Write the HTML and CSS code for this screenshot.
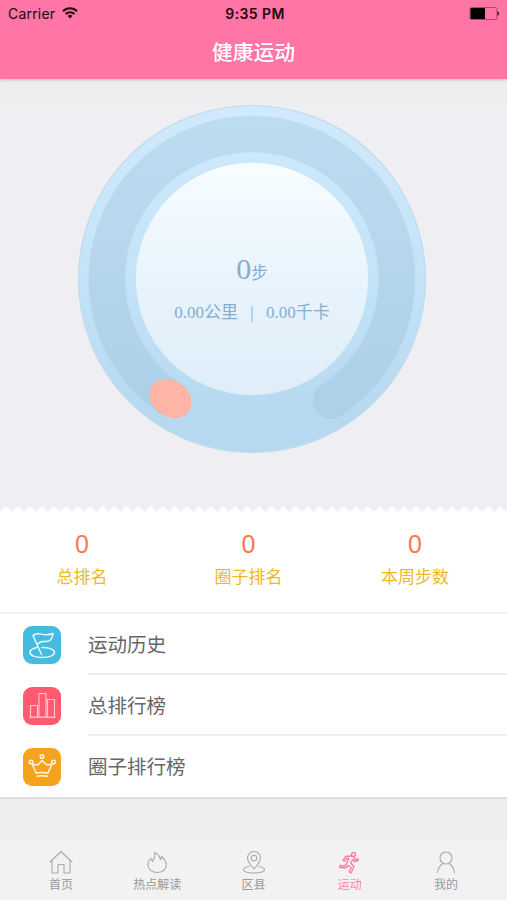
FILE: index.html
```html
<!DOCTYPE html>
<html lang="zh-CN">
<head>
<meta charset="utf-8">
<title>健康运动</title>
<link rel="stylesheet" href="styles.css">
</head>
<body>
<div class="app">
  <header class="header">
    <div class="status">
      <div class="carrier">Carrier
        <svg class="wifi" width="16" height="12" viewBox="0 0 16 12" fill="none" stroke="#23080f" stroke-width="2"><path d="M1 4.2a10 10 0 0 1 14 0M3.6 7a6.3 6.3 0 0 1 8.8 0"/><path d="M8 11.5 5.6 9a3.4 3.4 0 0 1 4.8 0z" fill="#23080f" stroke="none"/></svg>
      </div>
      <div class="time">9:35 PM</div>
      <div class="power"><svg width="31" height="13" viewBox="0 0 31 13"><rect x="1" y=".5" width="27" height="12" rx="1.500" fill="none" stroke="#a34e6d"/><path d="M1.500 1H16v11H1.500z" fill="#000"/><path d="M28.500 4q3 2.500 0 5z" fill="#23080f"/></svg></div>
    </div>
    <h1 class="title">健康运动</h1>
  </header>

  <main class="dial-area">
    <div class="dial">
      <svg class="dial-art" width="350" height="350" viewBox="-175 -175 350 350">
        <defs>
          <linearGradient id="disc" x1="0" y1="0" x2="0" y2="1"><stop offset="0" stop-color="#d1eafd"/><stop offset=".5" stop-color="#c3e3f7"/><stop offset=".85" stop-color="#b8daf0"/><stop offset="1" stop-color="#b5d8f0"/></linearGradient>
          <linearGradient id="face" x1="0" y1="0" x2="0" y2="1"><stop offset="0" stop-color="#f7fdff"/><stop offset=".5" stop-color="#e8f4fd"/><stop offset="1" stop-color="#deedf8"/></linearGradient>
          <linearGradient id="track" gradientUnits="userSpaceOnUse" x1="0" y1="-163" x2="0" y2="140"><stop offset="0" stop-color="#bedcf0"/><stop offset="1" stop-color="#abd0e7"/></linearGradient>
        </defs>
        <circle r="173.500" fill="url(#disc)" stroke="#bddcec" stroke-width="1.200"/>
        <path d="M-81.500 120A145 145 0 1 1 79 121.500" fill="none" stroke="url(#track)" stroke-width="36.500" stroke-linecap="round"/>
        <ellipse rx="22.500" ry="18" transform="translate(-81.500 119.500) rotate(36)" fill="#ffb5a5"/>
        <circle r="116.200" fill="url(#face)"/>
      </svg>
      <div class="readout">
        <div class="steps"><span class="steps-num">0</span>步</div>
        <div class="detail"><span>0.00公里</span><span class="bar">|</span><span>0.00千卡</span></div>
      </div>
    </div>
  </main>

  <svg class="zigzag" width="507" height="7"><defs><pattern id="teeth" width="12.060" height="7" patternUnits="userSpaceOnUse"><path d="M0 6 4.800 1Q6 0 7.200 1L12.060 6V7H0z" fill="#fff"/></pattern></defs><rect width="507" height="7" fill="url(#teeth)"/></svg>
  <section class="stats">
    <div class="stat"><b>0</b><span>总排名</span></div>
    <div class="stat"><b>0</b><span>圈子排名</span></div>
    <div class="stat"><b>0</b><span>本周步数</span></div>
  </section>

  <section class="menu">
    <div class="row">
      <svg class="badge" viewBox="0 0 38 38"><rect width="38" height="38" rx="9" fill="#45bcdf"/><g fill="none" stroke="#e9f9fd" stroke-width="1.500" stroke-linejoin="round" stroke-linecap="round"><path d="M18.500 28.500 10 9.500C15 4.500 20 11.500 30 7.500C29.500 13 27 16 22 15.500C18 15 16 16 14 18.500"/><path d="M14 21.500C9 22.500 7 24.500 7 26.500C7 29.500 12 31.500 19 31.500S31.500 29.500 31.500 26.500S26 21.500 19 21.500"/></g></svg>
      <span class="label">运动历史</span>
    </div>
    <div class="row">
      <svg class="badge" viewBox="0 0 38 38"><rect width="38" height="38" rx="9" fill="#ff5a70"/><g fill="none" stroke="#ffc4cc" stroke-width="1.200"><path d="M7.500 18.500h7v11.500h-7zM16 6.500h7v23.500h-7zM24.500 12.500h7v17.500h-7zM6.500 30.500h26"/></g></svg>
      <span class="label">总排行榜</span>
    </div>
    <div class="row">
      <svg class="badge" viewBox="0 0 38 38"><rect width="38" height="38" rx="9" fill="#f5a31d"/><g fill="none" stroke="#fff4dd" stroke-width="1.500" stroke-linejoin="round"><circle cx="19" cy="8.500" r="1.800"/><circle cx="8" cy="14" r="1.800"/><circle cx="30.500" cy="14" r="1.800"/><path d="m9.500 16.500 5.500.3L19 12.500l4.500 4.300 5.300-.3L25 25q-6-.8-12 0zM13.500 28.200q5.500-.9 11.500 0"/></g></svg>
      <span class="label">圈子排行榜</span>
    </div>
  </section>

  <nav class="tabs">
    <div class="tab"><svg viewBox="0 0 24 24"><path d="M1 12 12 1.500 23 12M3 10.500V23h6v-8.500h6V23h6V10.500"/></svg><span>首页</span></div>
    <div class="tab"><svg viewBox="0 0 24 24"><path d="M5.500 8.500q1.500.8 2 3Q10.500 7 9.500 2.500q4.500 1.500 6 7 1.200-1 1-3 4.800 4 4.800 8.700c0 4.300-4 7.300-9 7.300s-9.300-3-9.300-7.500Q3 11.500 5.500 8.500z"/></svg><span>热点解读</span></div>
    <div class="tab"><svg viewBox="0 0 24 24"><path d="M12 19Q5.500 12 5.500 8a6.500 6.500 0 0 1 13 0q0 4-6.500 11zM7 16.500q-5.500 1-5.500 3C1.500 22 6 23 12 23s10.500-1 10.500-3.500q0-2-5.500-3"/><circle cx="12" cy="8" r="2.800"/></svg><span>区县</span></div>
    <div class="tab active"><svg viewBox="0 0 24 24"><circle cx="15.500" cy="4.500" r="2"/><path d="M13 6 7.500 6.500 5 10.500l1.500.8L8.500 8.500h2.300L8.500 14l-2 2-4.500-.5-.5 1.800 6 .7 2.700-2.500 3 2-2 4.500 1.800 1 3-6.500-3.300-3.500 2-3.500 1.500 2 4-1-.4-1.600-2.800.4-1.200-2.500z"/></svg><span>运动</span></div>
    <div class="tab"><svg viewBox="0 0 24 24"><circle cx="12" cy="8" r="6"/><path d="M3.500 22.500Q4.500 16 9 13.500M15 13.500q4.500 2.500 5.500 9"/></svg><span>我的</span></div>
  </nav>
</div>
</body>
</html>
```
FILE: styles.css
```css
* { box-sizing: border-box; }
body { margin: 0; font-family: "Liberation Sans", "Noto Sans CJK SC", sans-serif; }
.app { width: 507px; height: 900px; display: flex; flex-direction: column; background: #eee; overflow: hidden; }
.header { height: 79px; flex: none; background: #ff75a5; box-shadow: 0 1px 3px rgba(0, 0, 0, .2); z-index: 1; }
.status { height: 27px; display: grid; grid-template-columns: 1fr auto 1fr; align-items: center; padding: 0 7px 0 8px; font-family: Inter, "Liberation Sans", sans-serif; color: #23080f; }
.carrier { display: flex; align-items: center; gap: 7px; font-size: 14px; letter-spacing: .2px; }
.wifi { margin-top: -2px; }
.time { font-size: 14px; font-weight: 600; letter-spacing: .4px; padding-left: 2px; }
.power { display: flex; justify-content: flex-end; }
.title { margin: 11px 0 0; font-size: 20.800px; line-height: 30px; font-weight: 500; color: #fff; text-align: center; }
.dial-area { height: 427px; flex: none; background: #efeef3; border-top: 25px solid #eee; }
.dial { width: 350px; height: 350px; margin-left: 77px; display: grid; }
.dial-art { grid-area: 1 / 1; }
.readout { grid-area: 1 / 1; z-index: 1; display: flex; flex-direction: column; align-items: center; padding-top: 147px; color: #87adcd; font-family: "Liberation Serif", "Noto Sans CJK SC", serif; }
.steps { font-size: 16.500px; line-height: 36px; }
.steps-num { font-size: 30px; }
.detail { display: flex; font-size: 17px; line-height: 24px; margin-top: 9px; }
.bar { width: 28px; text-align: center; }
.zigzag { display: block; flex: none; background: #efeef3; }
.stats { height: 101px; flex: none; display: grid; grid-template-columns: 164px 169px 164px; background: #fff; border-bottom: 2px solid #f3f3f3; }
.stat { display: flex; flex-direction: column; align-items: center; padding-top: 16px; }
.stat b { font-size: 25px; line-height: 30px; font-weight: 400; color: #f87850; }
.stat span { font-size: 17px; line-height: 24px; margin-top: 7px; color: #edb91f; }
.menu { flex: none; height: 185px; background: #fff; border-bottom: 2px solid #ddd; }
.row { height: 61px; display: flex; align-items: center; padding-left: 23px; }
.badge { width: 38px; height: 38px; margin-right: 27px; flex: none; }
.label { flex: 1; height: 61px; line-height: 63px; font-size: 19.500px; color: #666; border-bottom: 2px solid #eee; }
.row:last-child .label { border-bottom: 0; }
.tabs { margin-top: auto; height: 61px; flex: none; display: grid; grid-template-columns: repeat(5, 96.250px); justify-content: center; background: #f2f2f2; border-top: 1px solid #eee; }
.tab { display: flex; flex-direction: column; align-items: center; padding-top: 10px; font-size: 12px; line-height: 18px; color: #999; }
.tab svg { width: 24px; height: 24px; fill: none; stroke: #aaa; stroke-width: 1.100; stroke-linejoin: round; stroke-linecap: round; }
.tab span { margin-top: 2px; }
.tab.active { color: #ff85aa; }
.tab.active svg { stroke: #ff78a4; stroke-width: 1.300; }
```
